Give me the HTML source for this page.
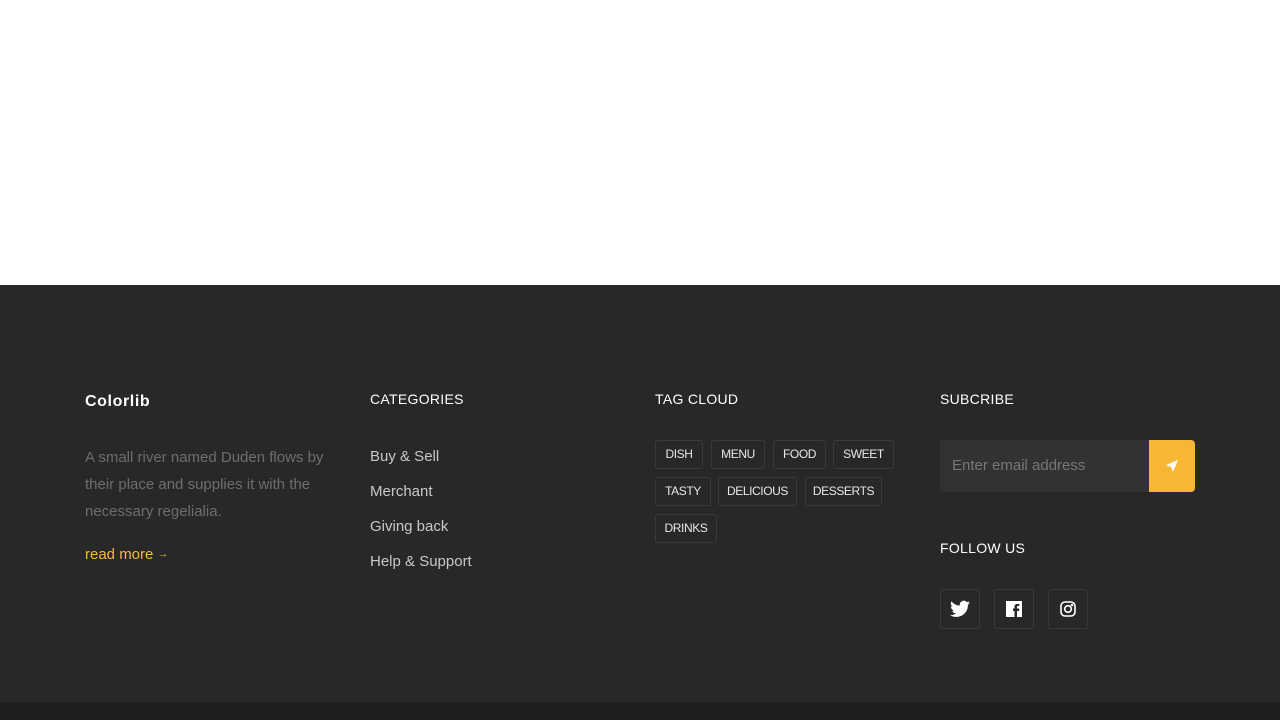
<!DOCTYPE html>
<html><head><style>
*{margin:0;padding:0;box-sizing:border-box}
body{width:1280px;height:720px;background:#fff;font-family:"Liberation Sans",sans-serif;position:relative;overflow:hidden}
.f{position:absolute;left:0;top:285px;width:1280px;height:417px;background:#282828}
.b{position:absolute;left:0;top:702px;width:1280px;height:18px;background:#1f1f1f}
.a{position:absolute;white-space:nowrap}
h{position:absolute;color:#fff;font-size:14px;letter-spacing:.3px;font-weight:normal}
.t{position:absolute;height:29px;border:1px solid #3a3a3a;border-radius:3px;color:#e8e8e8;font-size:12px;letter-spacing:-.4px;line-height:27px;text-align:center}
.cat{position:absolute;left:370px;color:#c8c8c8;font-size:15px}
.s{position:absolute;top:589px;width:40px;height:40px;border:1px solid #3a3a3a;border-radius:3px;display:flex;align-items:center;justify-content:center}
</style></head><body>
<div class="f"></div><div class="b"></div>
<div class="a" style="left:85px;top:393px;color:#fff;font-size:16px;font-weight:bold;letter-spacing:.6px">Colorlib</div>
<div class="a" style="left:85px;top:444px;color:#6e6e6e;font-size:15px;line-height:27px;white-space:normal;width:260px">A small river named Duden flows by their place and supplies it with the necessary regelialia.</div>
<div class="a" style="left:85px;top:546px;color:#f5b83d;font-size:15px">read more <span style="font-size:11px;position:relative;top:-2px">→</span></div>
<h style="left:370px;top:391px">CATEGORIES</h>
<div class="cat" style="top:448px">Buy &amp; Sell</div>
<div class="cat" style="top:483px">Merchant</div>
<div class="cat" style="top:518px">Giving back</div>
<div class="cat" style="top:553px">Help &amp; Support</div>
<h style="left:655px;top:391px">TAG CLOUD</h>
<div class="t" style="left:655px;top:440px;width:48px">DISH</div>
<div class="t" style="left:711px;top:440px;width:54px">MENU</div>
<div class="t" style="left:773px;top:440px;width:53px">FOOD</div>
<div class="t" style="left:833px;top:440px;width:61px">SWEET</div>
<div class="t" style="left:655px;top:477px;width:56px">TASTY</div>
<div class="t" style="left:718px;top:477px;width:79px">DELICIOUS</div>
<div class="t" style="left:805px;top:477px;width:77px">DESSERTS</div>
<div class="t" style="left:655px;top:514px;width:62px">DRINKS</div>
<h style="left:940px;top:391px">SUBCRIBE</h>
<div class="a" style="left:940px;top:440px;width:255px;height:52px;background:#323232;border-radius:4px"></div>
<div class="a" style="left:952px;top:457px;color:#777;font-size:15px">Enter email address</div>
<div class="a" style="left:1149px;top:440px;width:46px;height:52px;background:#f7b733;border-radius:0 4px 4px 0;display:flex;align-items:center;justify-content:center">
<svg width="14" height="14" viewBox="0 0 16 16"><path d="M15 1L1 7l6 2 2 6z" fill="#fff"/></svg></div>
<h style="left:940px;top:540px">FOLLOW US</h>
<div class="s" style="left:940px"><svg width="20" height="18" viewBox="0 0 24 20"><path d="M24 2.4a10 10 0 0 1-2.8.8A5 5 0 0 0 23.3.5a10 10 0 0 1-3.1 1.2A4.9 4.9 0 0 0 11.8 6 14 14 0 0 1 1.7.9a4.9 4.9 0 0 0 1.5 6.6A4.9 4.9 0 0 1 1 6.9a4.9 4.9 0 0 0 3.9 4.9 5 5 0 0 1-2.2.1 4.9 4.9 0 0 0 4.6 3.4A9.9 9.9 0 0 1 0 17.3 14 14 0 0 0 7.5 19.5c9 0 14-7.5 14-14v-.6A10 10 0 0 0 24 2.4z" fill="#fff"/></svg></div>
<div class="s" style="left:994px"><svg width="16" height="16" viewBox="0 0 16 16"><path d="M0 0h16v16h-5v-6h2l.3-2.5H11V6c0-.7.3-1 1-1h1.3V3h-2c-2 0-2.8 1.2-2.8 2.8v1.7H7V10h1.5v6H0z" fill="#fff"/></svg></div>
<div class="s" style="left:1048px"><svg width="16" height="16" viewBox="0 0 16 16" fill="none" stroke="#fff" stroke-width="1.6"><rect x="1" y="1" width="14" height="14" rx="4"/><circle cx="8" cy="8" r="3.3"/><circle cx="12" cy="4" r=".5" fill="#fff"/></svg></div>
</body></html>
